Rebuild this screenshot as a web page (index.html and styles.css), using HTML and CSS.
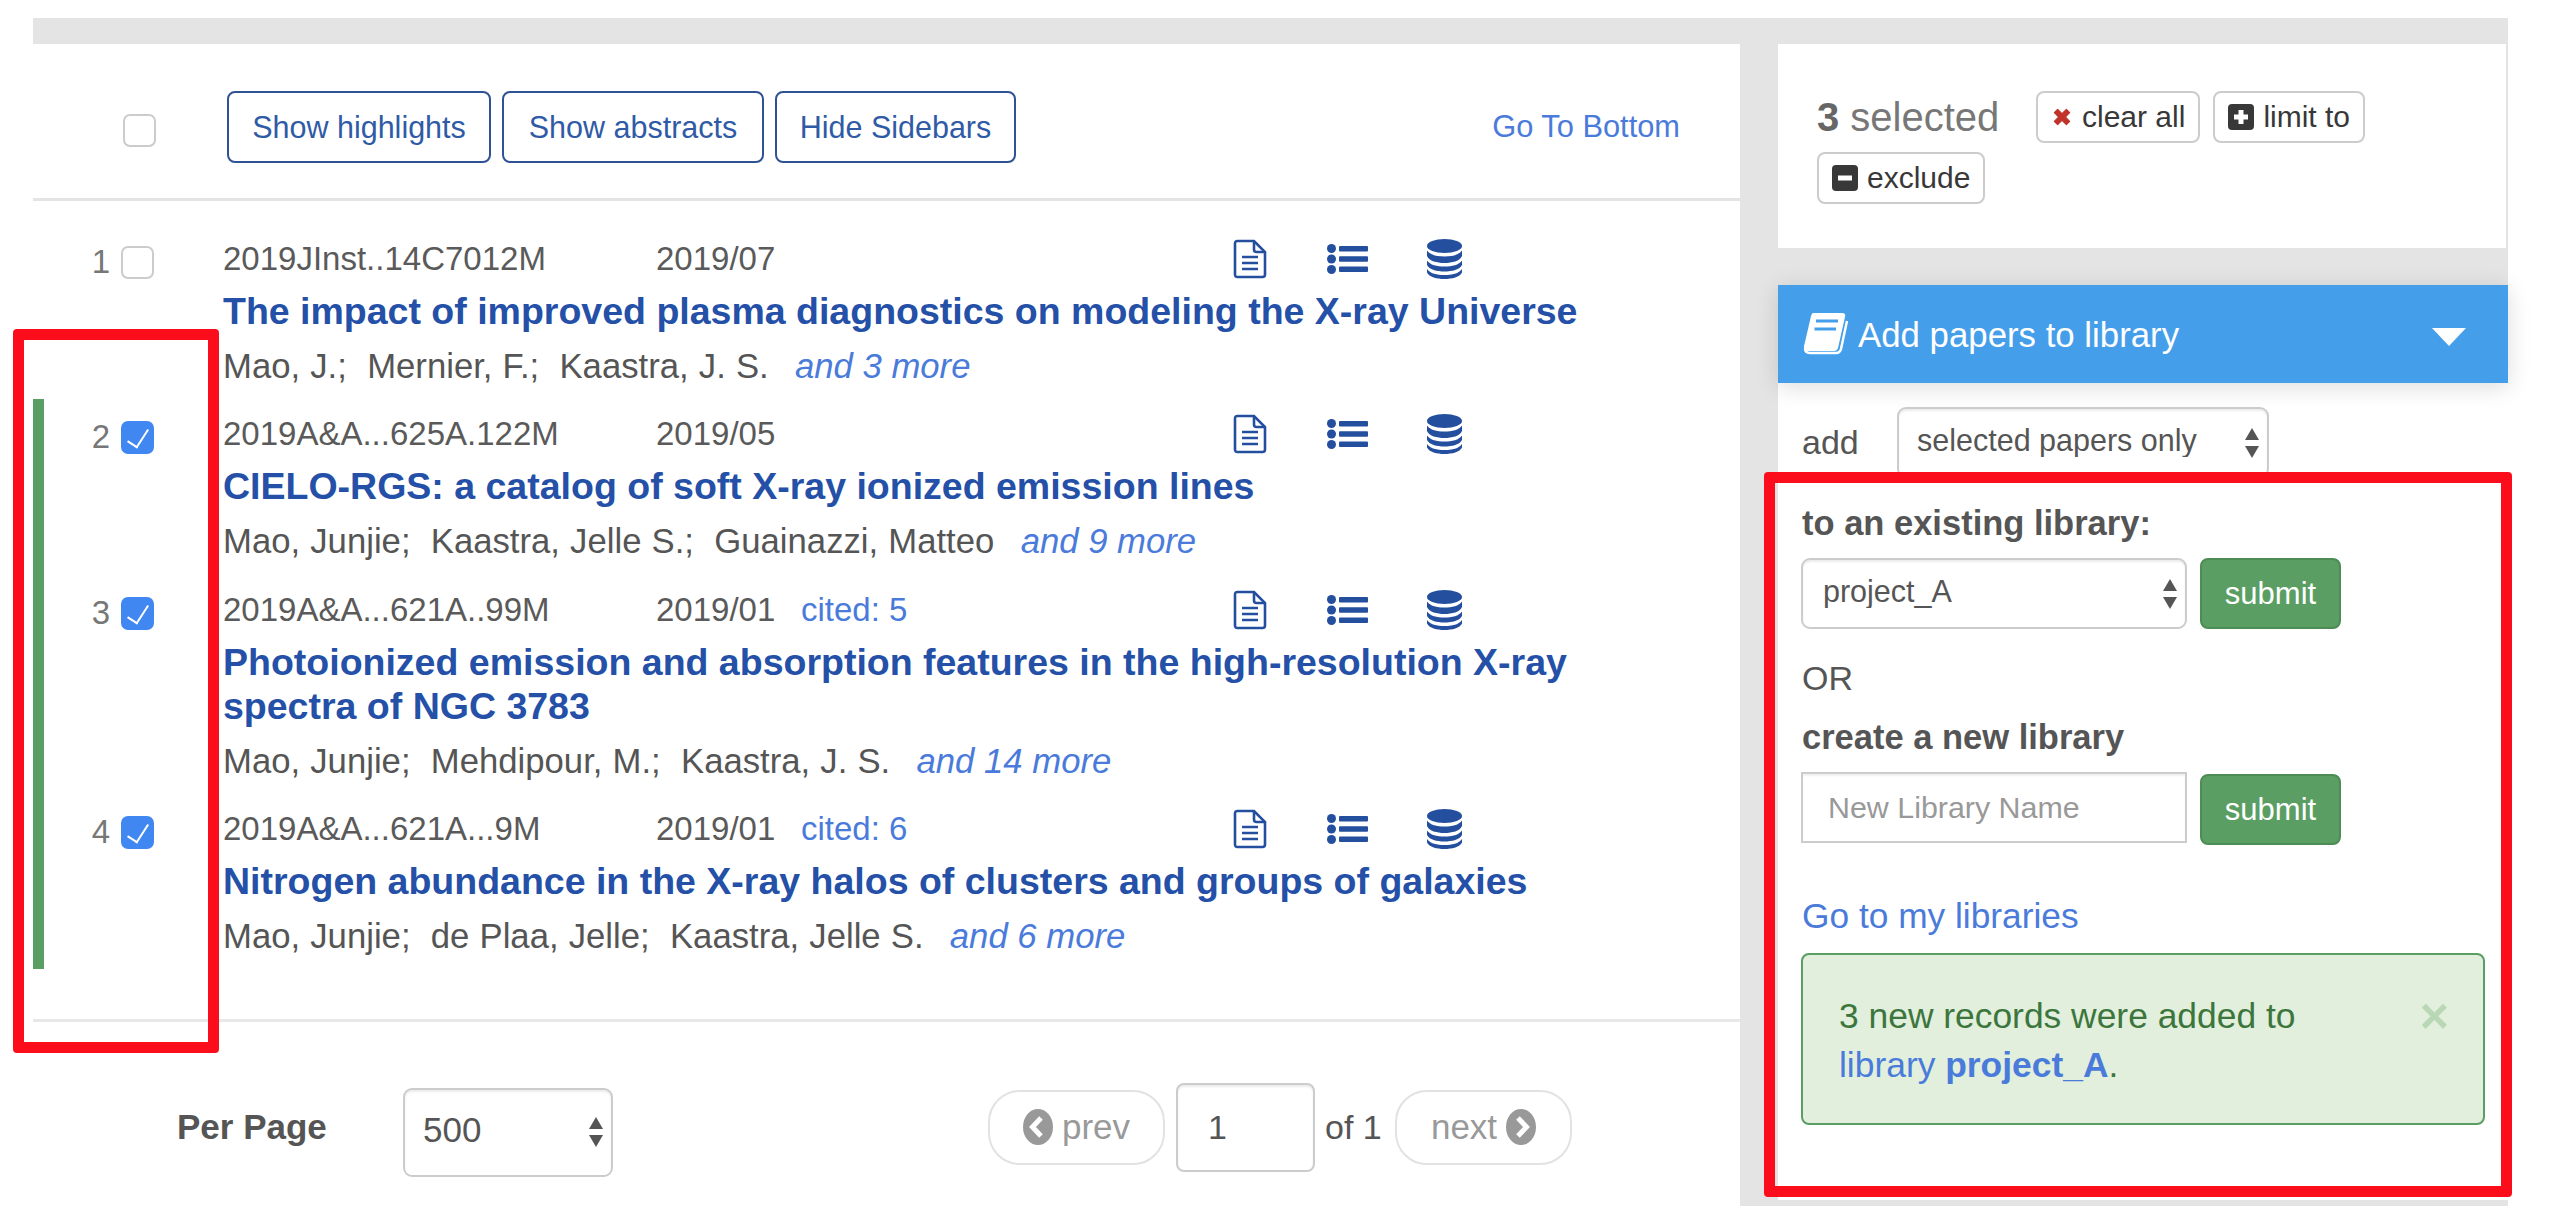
FILE: index.html
```html
<!DOCTYPE html>
<html>
<head>
  <title>Search results</title>
  <link rel="stylesheet" href="styles.css">
</head>
<body>
  <svg class="defs" width="0" height="0">
    <symbol id="doc" viewBox="0 0 34 40">
      <path d="M2 4.5Q2 2 4.5 2H21L32 13V35.5Q32 38 29.500 38H4.500Q2 38 2 35.500Z" fill="none" stroke="currentColor" stroke-width="2.600"/>
      <path d="M21 2V10.500Q21 13 23.500 13H32" fill="none" stroke="currentColor" stroke-width="2.600"/>
      <path d="M9 18H25M9 24H25M9 30H25" stroke="currentColor" stroke-width="2.400"/>
    </symbol>
    <symbol id="list" viewBox="0 0 41 30">
      <circle cx="4.500" cy="4.500" r="4.500" fill="currentColor"/>
      <circle cx="4.500" cy="15" r="4.500" fill="currentColor"/>
      <circle cx="4.500" cy="25.500" r="4.500" fill="currentColor"/>
      <rect x="12" y="2" width="29" height="5.500" rx="1" fill="currentColor"/>
      <rect x="12" y="12.200" width="29" height="5.500" rx="1" fill="currentColor"/>
      <rect x="12" y="22.500" width="29" height="5.500" rx="1" fill="currentColor"/>
    </symbol>
    <symbol id="db" viewBox="0 0 35 40">
      <ellipse cx="17.500" cy="7" rx="17.500" ry="7" fill="currentColor"/>
      <path d="M0 11.500C3 16 10 17.500 17.500 17.500S32 16 35 11.500V17C33 22 25 24 17.500 24S2 22 0 17Z" fill="currentColor"/>
      <path d="M0 21.500C3 26 10 27.500 17.500 27.500S32 26 35 21.500V26C33 30.500 25 32.500 17.500 32.500S2 30.500 0 26Z" fill="currentColor"/>
      <path d="M0 30C3 34.500 10 36 17.500 36S32 34.500 35 30V33.500C33 38 25 40 17.500 40S2 38 0 33.500Z" fill="currentColor"/>
    </symbol>
    <symbol id="chev-left" viewBox="0 0 30 36">
      <ellipse cx="15" cy="18" rx="15" ry="18" fill="currentColor"/>
      <path d="M18 9L9.500 18L18 27" fill="none" stroke="#fff" stroke-width="5"/>
    </symbol>
    <symbol id="chev-right" viewBox="0 0 30 36">
      <ellipse cx="15" cy="18" rx="15" ry="18" fill="currentColor"/>
      <path d="M12 9L20.500 18L12 27" fill="none" stroke="#fff" stroke-width="5"/>
    </symbol>
  </svg>

  <div class="layout">
    <main class="results">
      <div class="toolbar">
        <input type="checkbox" class="check check-all">
        <button class="outline-btn">Show highlights</button>
        <button class="outline-btn">Show abstracts</button>
        <button class="outline-btn">Hide Sidebars</button>
        <a class="bottom-link">Go To Bottom</a>
      </div>

      <div class="result-list">
        <div class="result">
          <span class="index">1</span>
          <input type="checkbox" class="check">
          <div class="result-body">
            <div class="meta">
              <span>2019JInst..14C7012M</span>
              <span>2019/07</span>
              <span></span>
              <span class="icons">
                <svg class="ic-doc"><use href="#doc"/></svg>
                <svg class="ic-list"><use href="#list"/></svg>
                <svg class="ic-db"><use href="#db"/></svg>
              </span>
            </div>
            <a class="title">The impact of improved plasma diagnostics on modeling the X-ray Universe</a>
            <div class="authors">Mao, J.;&nbsp; Mernier, F.;&nbsp; Kaastra, J. S. &nbsp;<em>and 3 more</em></div>
          </div>
        </div>

        <div class="result selected">
          <span class="index">2</span>
          <input type="checkbox" class="check" checked>
          <div class="result-body">
            <div class="meta">
              <span>2019A&amp;A...625A.122M</span>
              <span>2019/05</span>
              <span></span>
              <span class="icons">
                <svg class="ic-doc"><use href="#doc"/></svg>
                <svg class="ic-list"><use href="#list"/></svg>
                <svg class="ic-db"><use href="#db"/></svg>
              </span>
            </div>
            <a class="title">CIELO-RGS: a catalog of soft X-ray ionized emission lines</a>
            <div class="authors">Mao, Junjie;&nbsp; Kaastra, Jelle S.;&nbsp; Guainazzi, Matteo &nbsp;<em>and 9 more</em></div>
          </div>
        </div>

        <div class="result selected">
          <span class="index">3</span>
          <input type="checkbox" class="check" checked>
          <div class="result-body">
            <div class="meta">
              <span>2019A&amp;A...621A..99M</span>
              <span>2019/01</span>
              <a class="cited">cited: 5</a>
              <span class="icons">
                <svg class="ic-doc"><use href="#doc"/></svg>
                <svg class="ic-list"><use href="#list"/></svg>
                <svg class="ic-db"><use href="#db"/></svg>
              </span>
            </div>
            <a class="title">Photoionized emission and absorption features in the high-resolution X-ray spectra of NGC 3783</a>
            <div class="authors">Mao, Junjie;&nbsp; Mehdipour, M.;&nbsp; Kaastra, J. S. &nbsp;<em>and 14 more</em></div>
          </div>
        </div>

        <div class="result selected">
          <span class="index">4</span>
          <input type="checkbox" class="check" checked>
          <div class="result-body">
            <div class="meta">
              <span>2019A&amp;A...621A...9M</span>
              <span>2019/01</span>
              <a class="cited">cited: 6</a>
              <span class="icons">
                <svg class="ic-doc"><use href="#doc"/></svg>
                <svg class="ic-list"><use href="#list"/></svg>
                <svg class="ic-db"><use href="#db"/></svg>
              </span>
            </div>
            <a class="title">Nitrogen abundance in the X-ray halos of clusters and groups of galaxies</a>
            <div class="authors">Mao, Junjie;&nbsp; de Plaa, Jelle;&nbsp; Kaastra, Jelle S. &nbsp;<em>and 6 more</em></div>
          </div>
        </div>
      </div>

      <div class="pager">
        <strong class="per-page">Per Page</strong>
        <span class="select-wrap per-page-select">
          <select class="select"><option>500</option></select>
        </span>
        <button class="page-btn prev"><svg class="chev"><use href="#chev-left"/></svg> prev</button>
        <input type="text" class="page-input" value="1">
        <span class="page-of">of 1</span>
        <button class="page-btn next">next <svg class="chev"><use href="#chev-right"/></svg></button>
      </div>
    </main>

    <aside class="sidebar">
      <div class="selected-panel">
        <span class="selected-count"><b>3</b> selected</span>
        <button class="small-btn">
          <svg class="small-ic clear-ic" viewBox="0 0 20 20"><path d="M3 6L6 3L10 7L14 3L17 6L13 10L17 14L14 17L10 13L6 17L3 14L7 10Z" fill="#c0332a" stroke="#c0332a" stroke-linejoin="round"/></svg>
          clear all
        </button>
        <button class="small-btn">
          <svg class="small-ic" viewBox="0 0 26 26"><rect width="26" height="26" rx="4" fill="#383838"/><path d="M13 6V20M6 13H20" stroke="#fff" stroke-width="5"/></svg>
          limit to
        </button>
        <button class="small-btn">
          <svg class="small-ic" viewBox="0 0 26 26"><rect width="26" height="26" rx="4" fill="#383838"/><path d="M6 13H20" stroke="#fff" stroke-width="5"/></svg>
          exclude
        </button>
      </div>

      <div class="library-panel">
        <div class="library-head">
          <svg class="book" viewBox="0 0 46 44">
            <path d="M11 1H40Q44 1 43 5L36 36Q35 39 32 39H6Q2 39 2 35Q2 33 3 30L9 4Q10 1 11 1Z" fill="#fff"/>
            <path d="M3 36Q3 41 8 41H34Q38 41 39 37L45 9" fill="none" stroke="#fff" stroke-width="2.500"/>
            <path d="M14 9H36M12.500 17H34" stroke="#459ee9" stroke-width="3"/>
          </svg>
          <span class="library-title">Add papers to library</span>
          <span class="caret"></span>
        </div>
        <div class="library-body">
          <div class="add-row">
            <span class="add-label">add</span>
            <span class="select-wrap add-select">
              <select class="select"><option>selected papers only</option></select>
            </span>
          </div>

          <div class="form-label existing-label">to an existing library:</div>
          <div class="form-row">
            <span class="select-wrap library-select">
              <select class="select"><option>project_A</option></select>
            </span>
            <button class="submit-btn">submit</button>
          </div>

          <div class="or-label">OR</div>
          <div class="form-label new-label">create a new library</div>
          <div class="form-row">
            <input type="text" class="name-input" placeholder="New Library Name">
            <button class="submit-btn submit-low">submit</button>
          </div>

          <a class="libraries-link">Go to my libraries</a>

          <div class="alert">
            <span class="alert-close">&times;</span>
            3 new records were added to<br>
            <a>library <b>project_A</b></a>.
          </div>
        </div>
      </div>
    </aside>
  </div>

  <div class="mark mark-left"></div>
  <div class="mark mark-right"></div>
</body>
</html>
```

FILE: styles.css
```css
* {
  box-sizing: border-box;
}

html,
body {
  margin: 0;
  height: 1224px;
  overflow: hidden;
  background-color: #fff;
}

body {
  position: relative;
  padding-top: 18px;
  font-family: "Liberation Sans", Arial, sans-serif;
  color: #555;
}

.defs {
  position: absolute;
}

button,
select,
input {
  font-family: inherit;
}

/* page frame */
.layout {
  display: grid;
  grid-template-columns: 1707px 730px;
  column-gap: 38px;
  width: 2475px;
  height: 1188px;
  margin-left: 33px;
  padding-top: 26px;
  background-color: #e4e4e4;
}

.results {
  background-color: #fff;
  height: 1180px;
  margin-bottom: -18px;
}

/* toolbar */
.toolbar {
  display: flex;
  align-items: center;
  height: 157px;
  padding-top: 12px;
  padding-left: 90px;
  padding-right: 60px;
  border-bottom: 3px solid #e4e4e4;
}

.outline-btn {
  width: 264px;
  height: 72px;
  padding: 0;
  margin-right: 11px;
  font-size: 30.500px;
  color: #2f5ba6;
  background-color: #fff;
  border: 2px solid #2f5294;
  border-radius: 8px;
}

.outline-btn:nth-of-type(2) {
  width: 262px;
}

.outline-btn:nth-of-type(3) {
  width: 241px;
}

.bottom-link {
  margin-left: auto;
  font-size: 30.800px;
  color: #4a7bdb;
}

/* checkboxes */
.check {
  appearance: none;
  position: relative;
  flex: none;
  width: 33px;
  height: 33px;
  margin: 0;
  background-color: #fff;
  border: 2px solid #ccc;
  border-radius: 7px;
}

.toolbar .check-all {
  margin-right: 71px;
  margin-top: 7px;
}

.check:checked {
  background-color: #4187f2;
  border-color: #4187f2;
}

.check:checked::after {
  content: "";
  position: absolute;
  left: 9px;
  top: 2px;
  width: 10px;
  height: 20px;
  border-right: 2.500px solid #fff;
  border-bottom: 2.500px solid #fff;
  transform: rotate(33deg);
}

/* result rows */
.result-list {
  padding-top: 23px;
  padding-bottom: 50px;
  border-bottom: 3px solid #e8e8e8;
}

.result {
  display: flex;
  align-items: flex-start;
  padding-top: 13px;
  padding-bottom: 11.300px;
  border-left: 11px solid transparent;
}

.result.selected {
  border-left-color: #5a9e63;
}

.index {
  width: 66px;
  margin-top: 7px;
  margin-right: 11px;
  font-size: 33px;
  line-height: 36px;
  color: #777;
  text-align: right;
}

.result > .check {
  margin-top: 9px;
}

.result-body {
  margin-left: 69px;
  width: 1360px;
}

.meta {
  display: grid;
  grid-template-columns: 433px 145px 432px auto;
  height: 44px;
  font-size: 33px;
  line-height: 44px;
  color: #5a5a5a;
}

.cited {
  color: #4a7bdb;
}

.icons {
  display: flex;
  align-items: center;
  color: #244f9e;
}

.ic-doc {
  width: 34px;
  height: 40px;
  margin-right: 60px;
}

.ic-list {
  width: 41px;
  height: 30px;
  margin-right: 59px;
}

.ic-db {
  width: 35px;
  height: 40px;
}

.title {
  display: block;
  margin-top: 8px;
  font-size: 37.500px;
  font-weight: bold;
  line-height: 44px;
  color: #2450a8;
}

.authors {
  margin-top: 11px;
  font-size: 34.700px;
  line-height: 44px;
  word-spacing: 0.500px;
  color: #555;
}

.authors em {
  margin-left: 6px;
  word-spacing: 0;
  color: #4a7bdb;
}

/* pager */
.pager {
  display: flex;
  align-items: center;
  height: 210px;
  padding-left: 144px;
}

.per-page {
  width: 226px;
  font-size: 35px;
  color: #555;
}

.select-wrap {
  position: relative;
  display: inline-block;
}

.select-wrap::before,
.select-wrap::after {
  content: "";
  position: absolute;
  right: 10px;
  width: 0;
  height: 0;
  border-left: 7px solid transparent;
  border-right: 7px solid transparent;
}

.select-wrap::before {
  top: calc(50% - 15px);
  border-bottom: 12px solid #555;
}

.select-wrap::after {
  top: calc(50% + 3px);
  border-top: 12px solid #555;
}

.select {
  appearance: none;
  display: block;
  width: 100%;
  height: 100%;
  padding-bottom: 5px;
  font-size: 30.500px;
  color: #555;
  background-color: #fff;
  border: 2px solid #ccc;
  border-radius: 9px;
  box-shadow: inset 0 2px 2px rgba(0, 0, 0, 0.08);
}

.per-page-select {
  width: 210px;
  height: 89px;
  margin-top: 10px;
  margin-right: 375px;
}

.per-page-select .select {
  padding-left: 18px;
  font-size: 35px;
}

.page-btn {
  display: flex;
  align-items: center;
  justify-content: center;
  gap: 9px;
  width: 177px;
  height: 75px;
  font-size: 35px;
  color: #999;
  background-color: #fff;
  border: 2px solid #e2e2e2;
  border-radius: 32px;
}

.chev {
  width: 30px;
  height: 36px;
  color: #999;
}

.page-input {
  width: 139px;
  height: 89px;
  margin-left: 11px;
  margin-right: 10px;
  padding-left: 30px;
  font-size: 34px;
  color: #555;
  border: 2px solid #ccc;
  border-radius: 8px;
  box-shadow: inset 0 2px 2px rgba(0, 0, 0, 0.08);
}

.page-of {
  width: 70px;
  font-size: 34px;
  color: #555;
}

/* sidebar */
.selected-panel {
  display: flex;
  flex-wrap: wrap;
  align-items: center;
  align-content: flex-start;
  gap: 9px 13px;
  height: 204px;
  margin-right: 2px;
  padding: 47px 110px 0 39px;
  background-color: #fff;
}

.selected-count {
  width: 206px;
  font-size: 40px;
  color: #777;
}

.selected-count b {
  color: #666;
}

.small-btn {
  display: flex;
  align-items: center;
  gap: 9px;
  height: 52px;
  padding: 0 13px;
  font-size: 30px;
  color: #383838;
  background-color: #fff;
  border: 2px solid #ccc;
  border-radius: 8px;
}

.small-ic {
  width: 26px;
  height: 26px;
}

.clear-ic {
  width: 22px;
  height: 22px;
}

.library-panel {
  margin-top: 37px;
  background-color: #fff;
  height: 915px;
}

.library-head {
  display: flex;
  align-items: center;
  height: 98px;
  padding-left: 24px;
  background-color: #459ee9;
  box-shadow: 0 4px 22px rgba(0, 0, 0, 0.14);
  position: relative;
}

.book {
  width: 46px;
  height: 44px;
}

.library-title {
  margin-left: 10px;
  margin-top: 2px;
  font-size: 34.800px;
  color: #fff;
}

.caret {
  margin-left: auto;
  margin-right: 42px;
  margin-top: 6px;
  width: 0;
  height: 0;
  border-left: 17px solid transparent;
  border-right: 17px solid transparent;
  border-top: 18px solid #fff;
}

.library-body {
  padding: 24px 24px 0;
}

.add-row {
  display: flex;
  align-items: center;
  height: 71px;
}

.add-label {
  width: 95px;
  font-size: 34px;
  color: #555;
}

.add-select {
  width: 372px;
  height: 71px;
}

.add-select .select {
  padding-left: 18px;
}

.form-label {
  font-size: 34.500px;
  font-weight: bold;
  line-height: 44px;
  color: #555;
}

.existing-label {
  margin-top: 23px;
  margin-bottom: 13px;
}

.new-label {
  margin-top: 15px;
  margin-bottom: 13px;
}

.form-row {
  display: flex;
  align-items: flex-start;
  gap: 13px;
  margin-left: -1px;
}

.library-select {
  width: 386px;
  height: 71px;
}

.library-select .select {
  padding-left: 20px;
}

.submit-btn {
  width: 141px;
  height: 71px;
  font-size: 31px;
  color: #fff;
  background-color: #5a9e63;
  border: 2px solid #4d8c55;
  border-radius: 8px;
}

.submit-low {
  margin-top: 2px;
}

.or-label {
  margin-top: 27px;
  font-size: 34px;
  line-height: 44px;
  color: #555;
}

.name-input {
  width: 386px;
  height: 71px;
  padding-left: 25px;
  font-size: 30.400px;
  border: 2px solid #ccc;
  box-shadow: inset 0 2px 2px rgba(0, 0, 0, 0.06);
}

.name-input::placeholder {
  color: #999;
}

.libraries-link {
  display: block;
  margin-top: 49px;
  font-size: 35.300px;
  line-height: 44px;
  color: #4a7bdb;
}

.alert {
  position: relative;
  width: 684px;
  height: 172px;
  margin-top: 15px;
  margin-left: -1px;
  padding: 37px 36px 0;
  font-size: 35.400px;
  line-height: 49px;
  color: #3c763d;
  background-color: #e1efdc;
  border: 2px solid #5a9e63;
  border-radius: 8px;
}

.alert a {
  color: #4a7bdb;
}

.alert-close {
  position: absolute;
  right: 34px;
  top: 36px;
  font-size: 50px;
  font-weight: bold;
  line-height: 50px;
  color: #b9d7b5;
}

/* red annotation boxes drawn over the page */
.mark {
  position: absolute;
  border: 11px solid #fc0d1b;
  border-radius: 4px;
}

.mark-left {
  left: 13px;
  top: 329px;
  width: 206px;
  height: 724px;
}

.mark-right {
  left: 1764px;
  top: 472px;
  width: 748px;
  height: 725px;
}
```
